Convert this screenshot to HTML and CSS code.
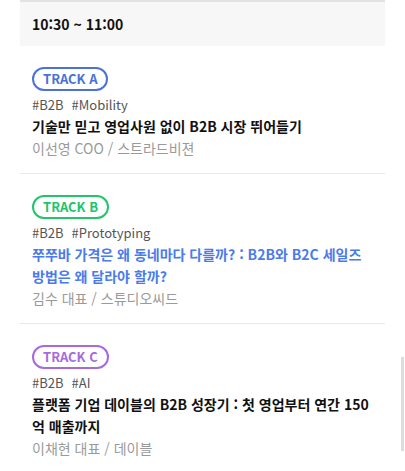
FILE: index.html
```html
<!DOCTYPE html>
<html lang="ko">
<head>
<meta charset="UTF-8">
<meta name="viewport" content="width=device-width, initial-scale=1.0">
<title>세션</title>
<link rel="stylesheet" href="styles.css">
</head>
<body>
<div class="timetable">
  <div class="time-head">10:30 ~ 11:00</div>

  <div class="session">
    <span class="track track-a">TRACK A</span>
    <div class="tags"><span>#B2B</span><span>#Mobility</span></div>
    <div class="title">기술만 믿고 영업사원 없이 B2B 시장 뛰어들기</div>
    <div class="speaker">이선영 COO / 스트라드비젼</div>
  </div>

  <div class="session">
    <span class="track track-b">TRACK B</span>
    <div class="tags"><span>#B2B</span><span>#Prototyping</span></div>
    <div class="title active">쭈쭈바 가격은 왜 동네마다 다를까? : B2B와 B2C 세일즈 방법은 왜 달라야 할까?</div>
    <div class="speaker">김수 대표 / 스튜디오씨드</div>
  </div>

  <div class="session">
    <span class="track track-c">TRACK C</span>
    <div class="tags"><span>#B2B</span><span>#AI</span></div>
    <div class="title">플랫폼 기업 데이블의 B2B 성장기 : 첫 영업부터 연간 150억 매출까지</div>
    <div class="speaker">이채현 대표 / 데이블</div>
  </div>
</div>
<div class="scroll-thumb"></div>
</body>
</html>
```
FILE: styles.css
```css
body {
    margin: 0;
    padding: 0;
    font-family: "Noto Sans CJK KR", "Noto Sans", sans-serif;
    background-color: #fff;
    color: #111;
    overflow: hidden;
  }

  .timetable {
    margin: 0 20px;
  }

  .time-head {
    border-top: 2px solid #e2e2e4;
    background-color: #f7f7f8;
    padding: 12px 12px;
    font-size: 14px;
    line-height: 20px;
    font-weight: 700;
  }

  .session {
    padding: 21px 12px 14px;
    border-bottom: 1px solid #e9e9ea;
  }

  .session:last-child {
    border-bottom: none;
  }

  .track {
    display: block;
    width: fit-content;
    box-sizing: border-box;
    height: 24px;
    padding: 0 9px;
    border: 2px solid;
    border-radius: 12px;
    font-size: 13px;
    line-height: 20px;
    font-weight: 700;
  }

  .track-a {
    color: #4a72d9;
    border-color: #4a72d9;
  }

  .track-b {
    color: #22c46c;
    border-color: #22c46c;
  }

  .track-c {
    color: #a76ade;
    border-color: #a76ade;
  }

  .tags {
    margin-top: 4px;
    font-size: 13px;
    line-height: 20px;
    color: #555;
  }

  .tags span {
    margin-right: 8px;
  }

  .title {
    font-size: 14px;
    line-height: 22px;
    font-weight: 700;
    color: #111;
  }

  .title.active {
    color: #4b7bea;
  }

  .speaker {
    font-size: 14px;
    line-height: 22px;
    color: #9a9a9a;
  }

  .scroll-thumb {
    position: fixed;
    right: 1px;
    top: 357px;
    width: 3px;
    height: 94px;
    background-color: #ddd;
  }
```
